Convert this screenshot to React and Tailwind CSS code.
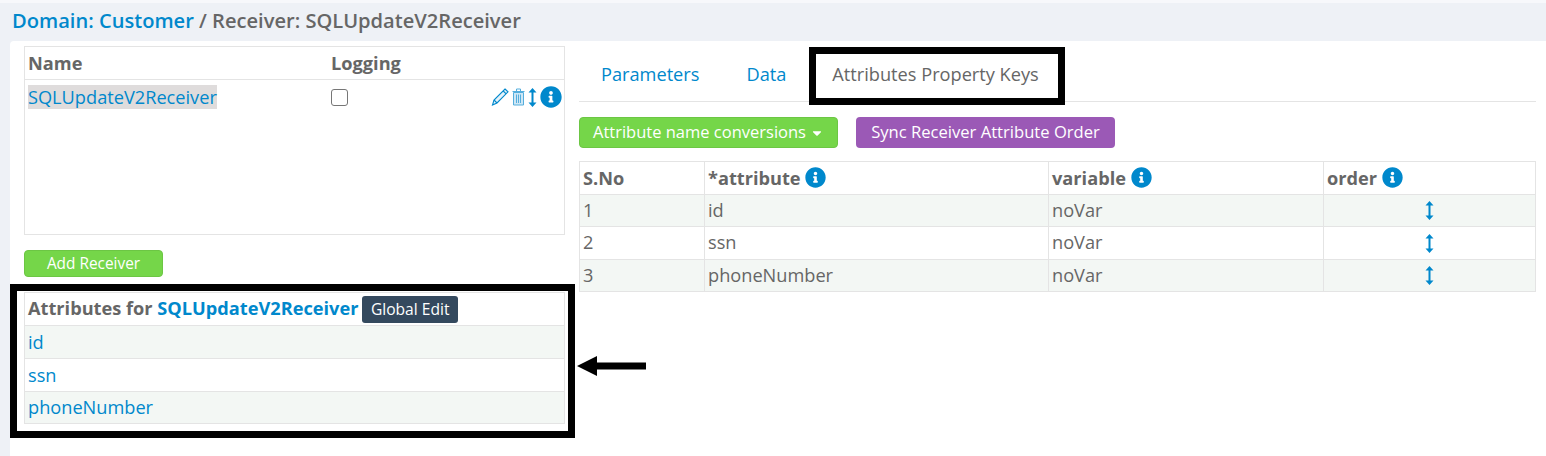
import React from "react";
import { FaInfoCircle, FaCaretDown } from "react-icons/fa";

const attributes = ["id", "ssn", "phoneNumber"];
const rowHeights = ["h-[32px]", "h-[33px]", "h-[32px]"];
const leftRowHeights = ["h-[33px]", "h-[33px]", "h-[32px]"];

const InfoIcon = ({ className = "" }) => (
  <FaInfoCircle className={`inline-block text-[#0088cc] ${className}`} />
);

const MoveIcon = () => (
  <svg className="inline-block" width="9" height="19" viewBox="0 0 9 19" fill="#0088cc">
    <path d="M4.5 0 L8.5 4.5 H5.5 V14.5 H8.5 L4.5 19 L0.5 14.5 H3.5 V4.5 H0.5 Z" />
  </svg>
);

const PencilIcon = () => (
  <svg width="18" height="18" viewBox="0 0 18 18" fill="none" stroke="#0088cc" strokeWidth="1.1">
    <path d="M14 1 L17 3.8 L6 15 L1.5 17 L3 12 Z" fill="#e4f2fa" />
    <path d="M3 12 L6 15" />
    <path d="M12.2 3 L15.2 5.8" />
  </svg>
);

const TrashIcon = () => (
  <svg width="13" height="18" viewBox="0 0 13 18" fill="#cfe7f5" stroke="#55aedd" strokeWidth="1">
    <path d="M0.5 3.5 H12.5" />
    <path d="M4.5 3 V1 H8.5 V3" fill="none" />
    <path d="M1.5 4.5 H11.5 V17 H1.5 Z" />
    <path d="M4.5 6.5 V15 M6.5 6.5 V15 M8.5 6.5 V15" fill="none" />
  </svg>
);

const App = () => {
  return (
    <div className="relative w-full h-[456px] overflow-hidden bg-[#eef1f6] font-['Open_Sans',sans-serif] text-[18.2px] text-[#666]">
      {/* Page title */}
      <div className="h-[41px] border-t-[3px] border-[#f7f8fb] pl-3 pt-[4px] text-[20.1px] leading-[27px] font-semibold">
        <span className="text-[#0088cc]">Domain: Customer</span> / Receiver: SQLUpdateV2Receiver
      </div>

      <div className="ml-[10px] h-[415px] bg-white flex items-start rounded-tl-sm">
        {/* Left column */}
        <div className="w-[569px] pl-[14px] pr-[14px] pt-[5px] shrink-0">
          <div className="h-[189px] w-[541px] border border-[#e4e4e4]">
            <div className="flex h-[33px] items-center border-b border-[#e4e4e4] pl-[3px] pt-[2px] font-bold">
              <span className="w-[303px]">Name</span>
              <span>Logging</span>
            </div>
            <div className="flex h-[34px] items-center pl-[3px]">
              <span className="w-[303px] pt-[1px]">
                <span className="bg-[#dfdcdc] text-[#0088cc]">SQLUpdateV2Receiver</span>
              </span>
              <span className="w-[17px] h-[17px] rounded-[3px] border border-[#767676] bg-white"></span>
              <span className="ml-auto mr-[2px] flex items-center">
                <PencilIcon />
                <span className="ml-[3px] flex"><TrashIcon /></span>
                <span className="ml-[3px] flex"><MoveIcon /></span>
                <InfoIcon className="text-[22px] ml-[3px]" />
              </span>
            </div>
          </div>

          <button className="block mt-[15px] h-[27px] w-[139px] rounded-[4px] border border-[#6cc644] bg-[#75d649] text-[15.4px] text-white">
            Add Receiver
          </button>

          <table className="mt-[15px] w-[541px] border-collapse border border-[#e4e4e4]">
            <tbody>
              <tr className="h-[33px]">
                <td className="border border-[#e4e4e4] px-[3px] py-0 font-bold leading-[27px]">
                  Attributes for <span className="text-[#0088cc]">SQLUpdateV2Receiver</span>{" "}
                  <span className="ml-[-1px] inline-block h-[27px] w-[96px] rounded-[3px] bg-[#34495e] text-center align-middle text-[15.6px] font-normal leading-[27px] text-white">
                    Global Edit
                  </span>
                </td>
              </tr>
              {attributes.map((name, idx) => (
                <tr key={name} className={`${leftRowHeights[idx]} ${idx % 2 === 0 ? "bg-[#f3f7f4]" : "bg-white"}`}>
                  <td className={`border border-[#e4e4e4] px-[3px] pb-0 text-[#0088cc] ${idx < 2 ? "pt-[2px]" : "pt-0"}`}>{name}</td>
                </tr>
              ))}
            </tbody>
          </table>
        </div>

        {/* Right column */}
        <div className="w-[957px] shrink-0">
          <div className="flex h-[61px] items-center border-b border-[#e4e4e4] pt-[8px]">
            <span className="ml-[22px] text-[#0088cc]">Parameters</span>
            <span className="ml-[47px] text-[#0088cc]">Data</span>
            <span className="ml-[46px]">Attributes Property Keys</span>
          </div>

          <div className="mt-[15px] flex items-center">
            <button className="flex h-[31px] w-[259px] items-center justify-center rounded-[4px] border border-[#6cc644] bg-[#75d649] text-[16.5px] text-white">
              Attribute name conversions
              <FaCaretDown className="ml-[4px] text-[14px]" />
            </button>
            <button className="ml-[18px] h-[31px] w-[259px] rounded-[4px] bg-[#9b59b6] text-[16.6px] text-white">
              Sync Receiver Attribute Order
            </button>
          </div>

          <table className="mt-[13px] w-[956px] table-fixed border-collapse border border-[#e4e4e4]">
            <colgroup>
              <col className="w-[125px]" />
              <col className="w-[344px]" />
              <col className="w-[275px]" />
              <col className="w-[212px]" />
            </colgroup>
            <thead>
              <tr className="h-[33px] text-left">
                <th className="border border-[#e4e4e4] px-[3px] pt-[2px] pb-0 font-bold">S.No</th>
                <th className="border border-[#e4e4e4] px-[3px] pt-[2px] pb-0 font-bold">
                  *attribute <InfoIcon className="text-[21px] align-[-3px]" />
                </th>
                <th className="border border-[#e4e4e4] px-[3px] pt-[2px] pb-0 font-bold">
                  variable <InfoIcon className="text-[21px] align-[-3px]" />
                </th>
                <th className="border border-[#e4e4e4] px-[3px] pt-[2px] pb-0 font-bold">
                  order <InfoIcon className="text-[21px] align-[-3px]" />
                </th>
              </tr>
            </thead>
            <tbody>
              {attributes.map((name, idx) => (
                <tr key={name} className={`${rowHeights[idx]} ${idx % 2 === 0 ? "bg-[#f3f7f4]" : "bg-white"}`}>
                  <td className="border border-[#e4e4e4] px-[3px] py-0">{idx + 1}</td>
                  <td className="border border-[#e4e4e4] px-[3px] py-0">{name}</td>
                  <td className="border border-[#e4e4e4] px-[3px] py-0">noVar</td>
                  <td className="border border-[#e4e4e4] py-0 text-center leading-[0]">
                    <MoveIcon />
                  </td>
                </tr>
              ))}
            </tbody>
          </table>
        </div>
      </div>

      {/* Annotations drawn on top of the screenshot */}
      <div className="absolute left-[809px] top-[47px] h-[58px] w-[256px] border-[7px] border-black"></div>
      <div className="absolute left-[10px] top-[284px] h-[154px] w-[565px] border-[7px] border-black"></div>
      <svg className="absolute left-[576px] top-[352px]" width="72" height="28" viewBox="0 0 72 28">
        <path d="M1 14 L21 4 V10.5 H70 V17.5 H21 V24 Z" fill="#000" />
      </svg>
    </div>
  );
};

export default App;
